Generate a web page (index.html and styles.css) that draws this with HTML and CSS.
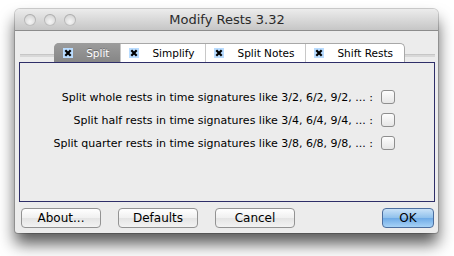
FILE: index.html
```html
<!DOCTYPE html>
<html>
<head>
<meta charset="utf-8">
<link rel="stylesheet" href="styles.css">
</head>
<body>
<div class="stage">
<div class="window">
  <div class="titlebar">
    <div class="lights"><span class="light"></span><span class="light"></span><span class="light"></span></div>
    <div class="title">Modify Rests 3.32</div>
  </div>
  <div class="content">
    <div class="tabrow">
      <div class="well"></div>
      <div class="tabs">
        <div class="tab active"><svg class="xb" viewBox="0 0 10 10"><rect width="10" height="10" fill="#b9dcff"/><path d="M2.3 2.3L7.7 7.7M7.7 2.3L2.3 7.7" stroke="#000" stroke-width="2.2"/></svg><span>Split</span></div>
        <div class="tab"><svg class="xb" viewBox="0 0 10 10"><rect width="10" height="10" fill="#b9dcff"/><path d="M2.3 2.3L7.7 7.7M7.7 2.3L2.3 7.7" stroke="#000" stroke-width="2.2"/></svg><span>Simplify</span></div>
        <div class="tab"><svg class="xb" viewBox="0 0 10 10"><rect width="10" height="10" fill="#b9dcff"/><path d="M2.3 2.3L7.7 7.7M7.7 2.3L2.3 7.7" stroke="#000" stroke-width="2.2"/></svg><span>Split Notes</span></div>
        <div class="tab last"><svg class="xb" viewBox="0 0 10 10"><rect width="10" height="10" fill="#b9dcff"/><path d="M2.3 2.3L7.7 7.7M7.7 2.3L2.3 7.7" stroke="#000" stroke-width="2.2"/></svg><span>Shift Rests</span></div>
      </div>
      <div class="well right"></div>
    </div>
    <div class="group">
      <div class="row"><span>Split whole rests in time signatures like 3/2, 6/2, 9/2, ... :</span><span class="cb"></span></div>
      <div class="row"><span>Split half rests in time signatures like 3/4, 6/4, 9/4, ... :</span><span class="cb"></span></div>
      <div class="row"><span>Split quarter rests in time signatures like 3/8, 6/8, 9/8, ... :</span><span class="cb"></span></div>
    </div>
    <div class="buttons">
      <button class="btn">About...</button>
      <button class="btn">Defaults</button>
      <button class="btn">Cancel</button>
      <div class="spacer"></div>
      <button class="btn ok">OK</button>
    </div>
  </div>
</div>
</div>
</body>
</html>
```
FILE: styles.css
```css
html, body { margin: 0; padding: 0; background: #fff; }
body { font-family: "DejaVu Sans", sans-serif; color: #000; }
.stage { width: 454px; height: 256px; padding: 9px 0 0 15px; box-sizing: border-box; }
.window {
  width: 423px;
  height: 224px;
  background: #ececec;
  border-radius: 5px 5px 3px 3px;
  box-shadow: 0 11px 16px rgba(0,0,0,0.65), 0 0 0 1px rgba(0,0,0,0.18);
  display: flex;
  flex-direction: column;
  overflow: hidden;
}
.titlebar {
  height: 21px;
  flex: none;
  background: linear-gradient(#ececec, #c6c6c6);
  border-bottom: 1px solid #8c8c8c;
  display: flex;
  align-items: center;
}
.lights { display: flex; gap: 8px; padding-left: 9px; }
.light {
  width: 12px; height: 12px; border-radius: 50%;
  background: radial-gradient(circle at 50% 65%, #f6f6f6 0%, #dcdcdc 55%, #bdbdbd 100%);
  box-shadow: inset 0 0 0 1px rgba(0,0,0,0.16);
}
.title {
  flex: 1;
  text-align: center;
  font-size: 13px;
  color: #2a2a2a;
  margin-left: -56px;
  margin-right: 4px;
}
.content { flex: 1; display: flex; flex-direction: column; padding: 12px 3px 0 4px; }
.tabrow { display: flex; align-items: center; height: 19px; }
.well { flex: 1 1 0; height: 2px; background: #d8d8d8; border-top: 1px solid #c6c6c6; margin-top: 5px; }
.well:first-child { margin-left: 1px; flex-grow: 33; }
.well.right { flex-grow: 29; }
.tabs {
  display: flex; height: 19px;
  background: #fff;
  border: 1px solid #a8a8a8;
  border-bottom: none;
  border-radius: 5px 5px 0 0;
  box-sizing: border-box;
}
.tab {
  display: flex; align-items: center;
  padding: 0 11px 0 8px;
  font-size: 10.5px;
  border-left: 1px solid #c8c8c8;
  height: 100%;
  box-sizing: border-box;
}
.tab:first-child { border-left: none; }
.tab .xb { width: 10px; height: 10px; margin-right: 13px; flex: none; }
.tab.active {
  background: linear-gradient(#9c9c9c, #868686);
  color: #fff;
  border-radius: 5px 0 0 0;
  margin: -1px 0 0 -1px;
  height: 19px;
  padding-left: 9px;
  text-shadow: 0 -1px 0 rgba(0,0,0,0.3);
}
.group {
  height: 140px;
  border: 1px solid #2e2e68;
  box-sizing: border-box;
  padding: 27px 39px 0 0;
  display: flex; flex-direction: column; align-items: flex-end; gap: 9px;
}
.row { display: flex; align-items: center; gap: 8px; font-size: 11px; height: 14px; }
.cb {
  width: 14px; height: 14px; box-sizing: border-box;
  border: 1px solid #8e8e8e; border-radius: 3px;
  background: linear-gradient(#fdfdfd, #e6e6e6);
}
.buttons { display: flex; gap: 17px; padding: 6px 1px 0 2px; }
.spacer { flex: 1; }
.btn {
  font-family: "DejaVu Sans", sans-serif;
  font-size: 12px;
  width: 80px; height: 20px;
  padding: 0;
  border: 1px solid #939393;
  border-radius: 4px;
  background: linear-gradient(#ffffff, #f0f0f0 50%, #e4e4e4 51%, #f3f3f3);
  color: #000;
}
.btn.ok {
  width: 52px;
  border-color: #4c6e9e;
  background: linear-gradient(#c9e2f8, #8fc0ec 50%, #6eaae6 51%, #a6d2f6);
}
```
